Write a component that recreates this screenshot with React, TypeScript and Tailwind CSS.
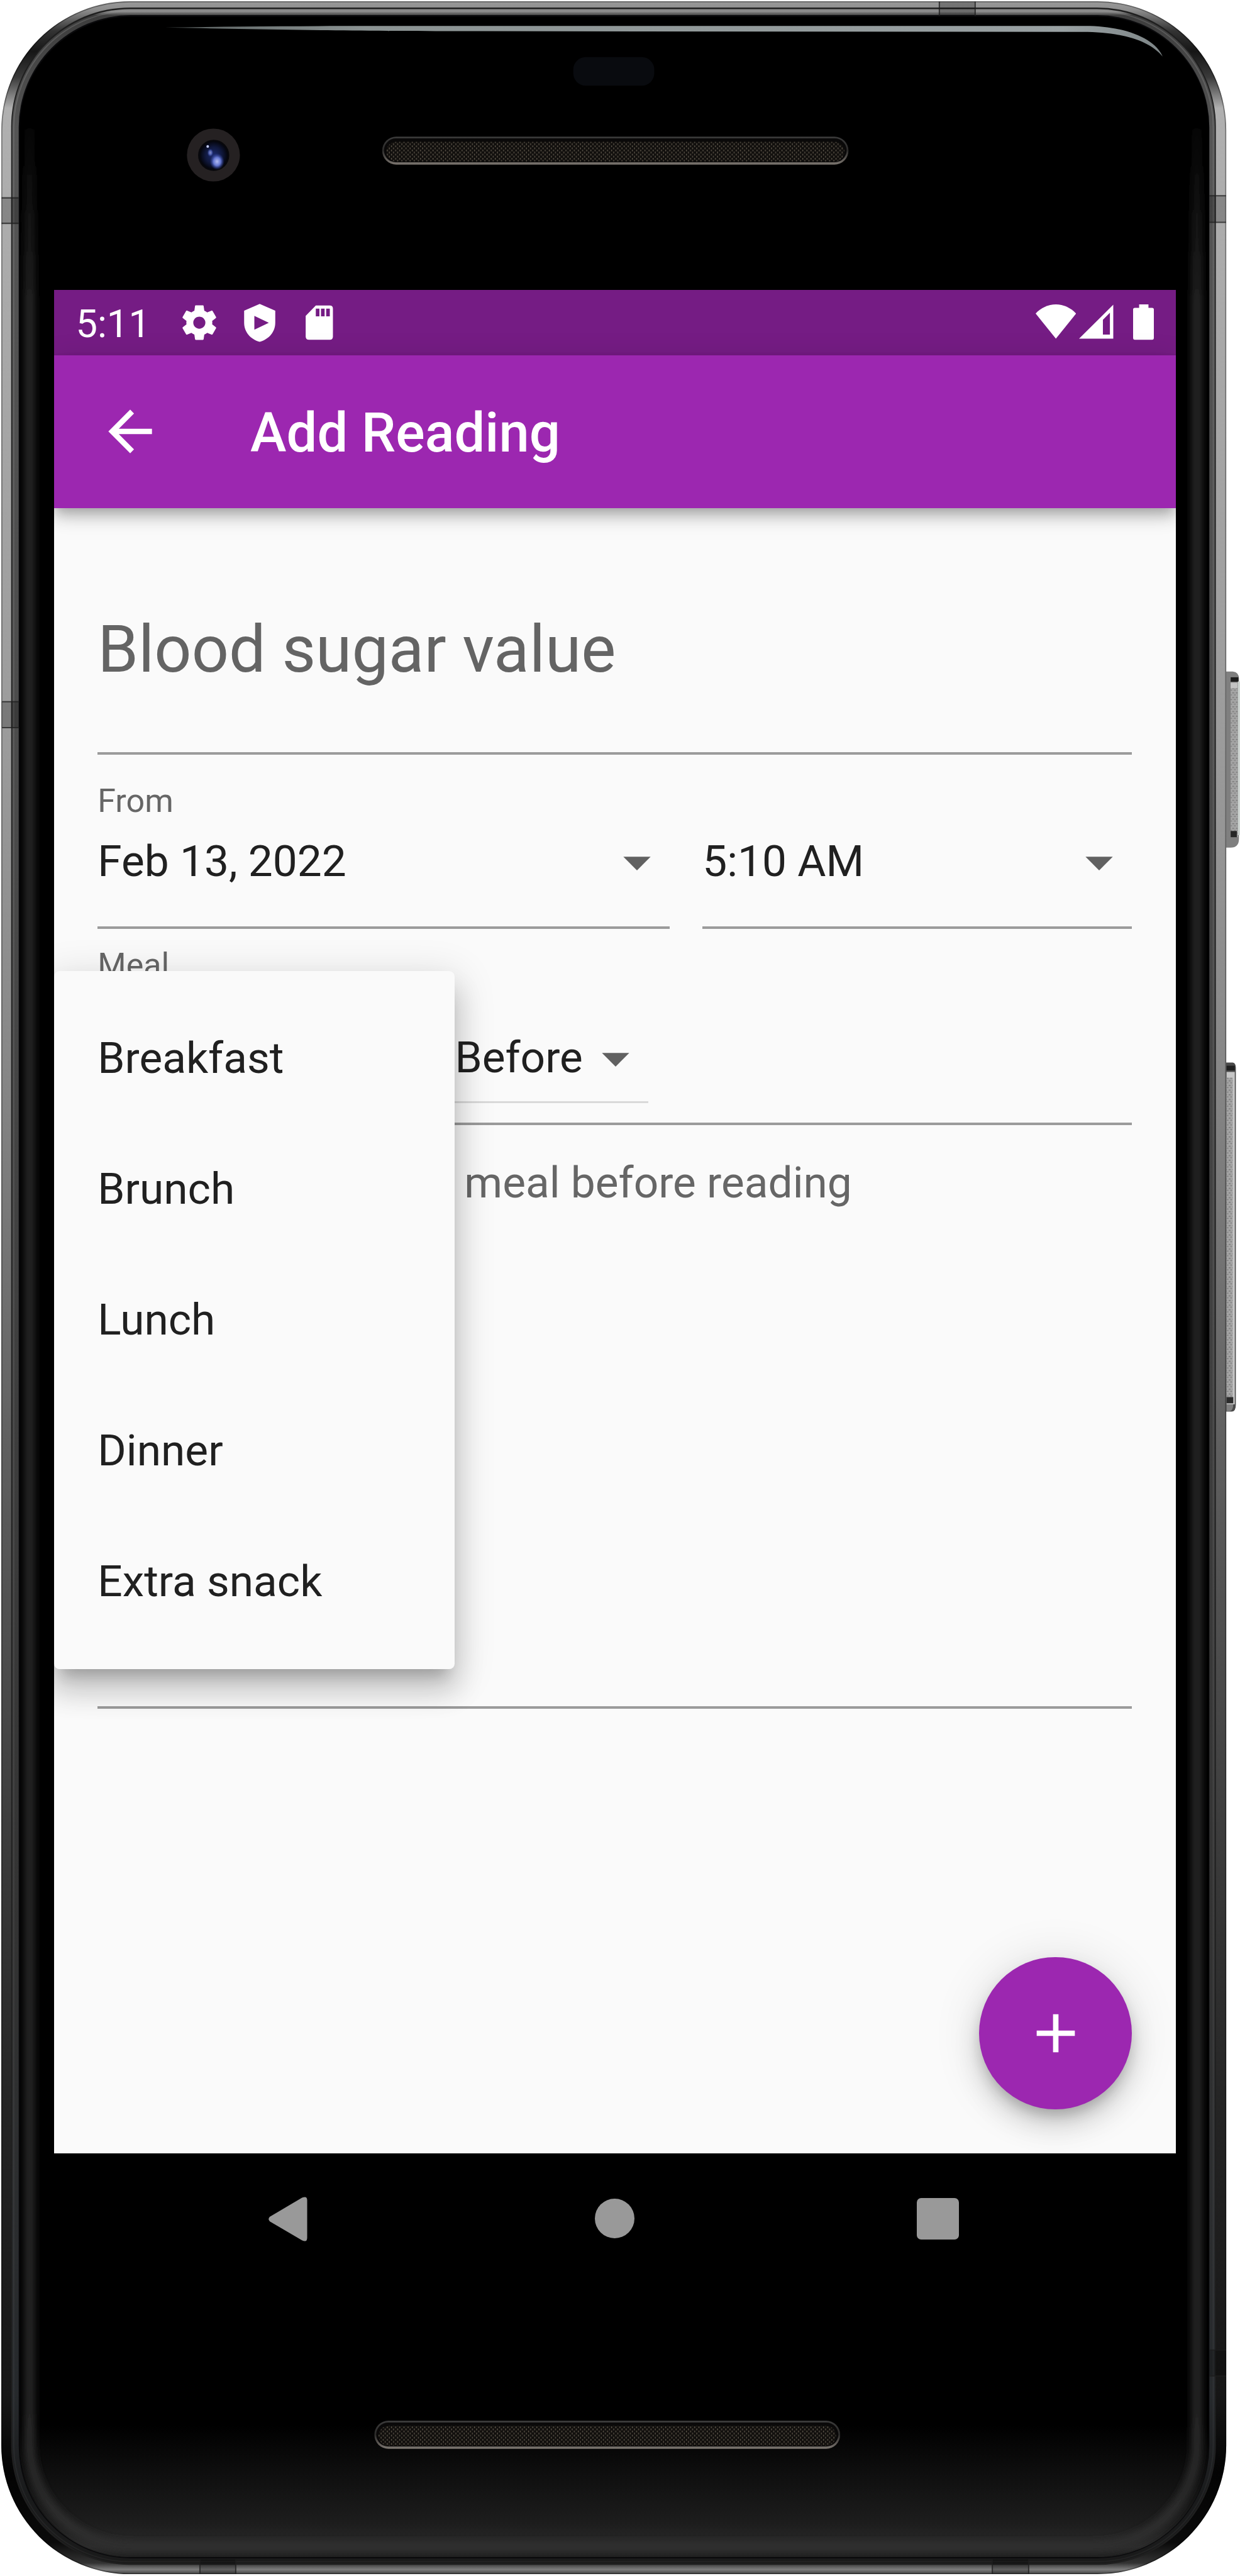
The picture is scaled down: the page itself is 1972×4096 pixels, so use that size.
import React from "react";

const meals = ["Breakfast", "Brunch", "Lunch", "Dinner", "Extra snack"];

function Grille({ x, y, w, h }: { x: number; y: number; w: number; h: number }) {
  return (
    <g>
      <rect x={x} y={y} width={w} height={h} rx={h / 2} fill="url(#grilleRim)" />
      <rect x={x + 3.5} y={y + 3.5} width={w - 7} height={h - 8} rx={(h - 8) / 2} fill="#0a0909" />
      <rect x={x + 8} y={y + 10} width={w - 16} height={h - 16} rx={(h - 16) / 2} fill="#110f0d" />
      <rect x={x + 8} y={y + 10} width={w - 16} height={h - 16} rx={(h - 16) / 2} fill="url(#mesh)" />
    </g>
  );
}

function PhoneFrame() {
  return (
    <svg className="absolute inset-0 h-full w-full" viewBox="0 0 2388 4960" preserveAspectRatio="none" aria-hidden="true">
      <defs>
        <linearGradient id="rim" gradientUnits="userSpaceOnUse" x1="0" y1="0" x2="0" y2="4960">
          <stop offset="0" stopColor="#9c9c9c" />
          <stop offset="0.004" stopColor="#8c8c8c" />
          <stop offset="0.012" stopColor="#333333" />
          <stop offset="0.02" stopColor="#161616" />
          <stop offset="0.03" stopColor="#3a3a3a" />
          <stop offset="0.042" stopColor="#b0b0b0" />
          <stop offset="0.29" stopColor="#9b9b9b" />
          <stop offset="0.42" stopColor="#868686" />
          <stop offset="0.56" stopColor="#606060" />
          <stop offset="0.73" stopColor="#383838" />
          <stop offset="0.82" stopColor="#242424" />
          <stop offset="0.93" stopColor="#161616" />
          <stop offset="0.96" stopColor="#030303" />
          <stop offset="0.987" stopColor="#0a0a0a" />
          <stop offset="0.995" stopColor="#333333" />
          <stop offset="0.9975" stopColor="#7d7d7d" />
          <stop offset="1" stopColor="#2a2a2a" />
        </linearGradient>
        <linearGradient id="lip" gradientUnits="userSpaceOnUse" x1="0" y1="0" x2="0" y2="4960">
          <stop offset="0" stopColor="#8a8a8a" />
          <stop offset="0.0045" stopColor="#8a8a8a" />
          <stop offset="0.006" stopColor="#3d3d3d" />
          <stop offset="0.05" stopColor="#555555" />
          <stop offset="0.3" stopColor="#4b4b4b" />
          <stop offset="0.75" stopColor="#333333" />
          <stop offset="0.93" stopColor="#26292c" />
          <stop offset="0.97" stopColor="#191a1b" />
          <stop offset="1" stopColor="#1a1a1a" />
        </linearGradient>
        <linearGradient id="lipEdge" gradientUnits="userSpaceOnUse" x1="0" y1="0" x2="0" y2="4960">
          <stop offset="0" stopColor="#999" stopOpacity="0.3" />
          <stop offset="0.6" stopColor="#999" stopOpacity="0.2" />
          <stop offset="1" stopColor="#777" stopOpacity="0.1" />
        </linearGradient>
        <linearGradient id="sheen" gradientUnits="userSpaceOnUse" x1="0" y1="0" x2="0" y2="4960">
          <stop offset="0.04" stopColor="#242424" stopOpacity="0" />
          <stop offset="0.12" stopColor="#262626" stopOpacity="1" />
          <stop offset="0.92" stopColor="#262626" />
          <stop offset="1" stopColor="#303030" />
        </linearGradient>
        <linearGradient id="floor" x1="0" y1="0" x2="0" y2="1">
          <stop offset="0" stopColor="#000" />
          <stop offset="0.35" stopColor="#0e0e0e" />
          <stop offset="0.75" stopColor="#1d1d1d" />
          <stop offset="0.92" stopColor="#2b2b2b" />
          <stop offset="1" stopColor="#1e1e1e" />
        </linearGradient>
        <linearGradient id="grilleRim" x1="0" y1="0" x2="0" y2="1">
          <stop offset="0" stopColor="#3a3a3a" />
          <stop offset="0.5" stopColor="#2c2b2a" />
          <stop offset="1" stopColor="#7b756f" />
        </linearGradient>
        <linearGradient id="glint" gradientUnits="userSpaceOnUse" x1="318" y1="0" x2="2240" y2="0">
          <stop offset="0" stopColor="#596060" />
          <stop offset="0.2" stopColor="#8b9393" />
          <stop offset="0.9" stopColor="#99a1a3" />
          <stop offset="1" stopColor="#7d8587" />
        </linearGradient>
        <radialGradient id="lens" cx="0.5" cy="0.5" r="0.5">
          <stop offset="0" stopColor="#1b2a6e" />
          <stop offset="0.6" stopColor="#10183c" />
          <stop offset="1" stopColor="#04050c" />
        </radialGradient>
        <radialGradient id="spot" cx="0.5" cy="0.5" r="0.5">
          <stop offset="0" stopColor="#b4bdf2" />
          <stop offset="0.5" stopColor="#6476d0" />
          <stop offset="1" stopColor="#2a3c98" stopOpacity="0" />
        </radialGradient>
        <pattern id="mesh" width="8" height="8" patternUnits="userSpaceOnUse">
          <rect x="1" y="0" width="1.8" height="3.4" fill="#5a5348" />
          <rect x="5" y="4" width="1.8" height="3.4" fill="#5a5348" />
        </pattern>
        <pattern id="knurl" width="7" height="9" patternUnits="userSpaceOnUse">
          <rect width="7" height="9" fill="#a6a6a6" />
          <rect x="0" y="1" width="4" height="2" fill="#7c7c7c" />
          <rect x="3" y="5" width="4" height="2" fill="#838383" />
        </pattern>
        <filter id="soft" filterUnits="userSpaceOnUse" x="0" y="0" width="2388" height="4960">
          <feGaussianBlur stdDeviation="7" />
        </filter>
        <clipPath id="glass">
          <rect x="38" y="32" width="2290" height="4892" rx="214" />
        </clipPath>
      </defs>

      {/* power key */}
      <path d="M2360 1293h14q12 1 12 14v308q0 17-16 17h-10z" fill="#7f7f7f" />
      <rect x="2370" y="1304" width="14" height="308" fill="url(#knurl)" />
      <rect x="2370" y="1304" width="15" height="9" fill="#1c1c1c" />
      <rect x="2370" y="1315" width="13" height="10" fill="#c4c4c4" />
      <rect x="2370" y="1600" width="12" height="12" fill="#262626" />
      <rect x="2384" y="1312" width="4" height="296" fill="#cfd5d2" />

      {/* volume rocker */}
      <path d="M2360 2046h14q6 1 6 10v648q0 14-8 14h-12z" fill="#4a4a4a" />
      <rect x="2362" y="2064" width="16" height="640" fill="#c6c6c6" />
      <rect x="2362" y="2075" width="12" height="615" fill="url(#knurl)" />
      <rect x="2362" y="2052" width="16" height="9" fill="#202020" />
      <rect x="2362" y="2690" width="13" height="12" fill="#2b2b2b" />
      <path d="M2362 2704h13q0 12-7 13h-6z" fill="#808080" />

      <rect x="2.5" y="2.5" width="2359" height="4954" rx="248" fill="url(#rim)" />
      <rect x="3.5" y="3.5" width="2357" height="4952" rx="247" fill="none" stroke="#000" strokeOpacity="0.35" strokeWidth="2" />
      <rect x="21.5" y="14.5" width="2320" height="4924" rx="229" fill="#1f1f1f" />
      <rect x="23.5" y="17.5" width="2316" height="4918" rx="227" fill="url(#lip)" />
      <rect x="26.5" y="21.5" width="2310" height="4911" rx="224" fill="none" stroke="url(#lipEdge)" strokeWidth="2" />
      <rect x="36" y="29" width="2293" height="4897" rx="216" fill="#0a0a0c" />
      <rect x="38" y="32" width="2290" height="4892" rx="214" fill="#000" />

      <g clipPath="url(#glass)">
        <rect x="30" y="4670" width="2310" height="254" fill="url(#floor)" />
        <path d="M57 230V4705A198 198 0 0 0 255 4903H2107A198 198 0 0 0 2305 4705V230" fill="none" stroke="url(#sheen)" strokeWidth="20" filter="url(#soft)" />
      </g>

      {/* antenna breaks */}
      <g fill="#000" fillOpacity="0.22">
        <rect x="3" y="381" width="33" height="49" />
        <rect x="3" y="1351" width="34" height="50" />
        <rect x="2329" y="377" width="32" height="51" />
        <rect x="2329" y="4525" width="32" height="50" />
        <rect x="1809" y="3" width="69" height="28" />
        <rect x="385" y="4928" width="69" height="28" />
        <rect x="1911" y="4928" width="70" height="28" />
      </g>
      <g stroke="#1d1d1d" strokeOpacity="0.75" strokeWidth="2.5">
        <path d="M3 381h33M3 430h33M4 1351h33M4 1401h33M2329 377h32M2329 428h32M2329 4525h32M2329 4575h32M1809 3v28M1878 3v28M385 4928v28M454 4928v28M1911 4928v28M1981 4928v28" />
      </g>

      <path d="M318 53C450 51 560 50 700 50H2090C2170 50 2226 76 2239 109C2214 78 2160 61.5 2085 61.5L900 60C640 60 480 56 318 53z" fill="url(#glint)" />

      <rect x="1104" y="110" width="156" height="55" rx="24" fill="#090b0f" />

      <circle cx="411" cy="298.500" r="51" fill="#252122" />
      <circle cx="411.500" cy="299" r="30" fill="#08080c" />
      <circle cx="411.500" cy="299" r="27" fill="url(#lens)" />
      <ellipse cx="418" cy="311" rx="14" ry="16" fill="url(#spot)" />
      <ellipse cx="405" cy="294" rx="6" ry="8" fill="url(#spot)" opacity="0.7" />
      <circle cx="400" cy="282" r="2.500" fill="#c3ccf5" />

      <Grille x={736} y={263} w={898} h={54} />
      <Grille x={721} y={4661} w={897} h={54} />
    </svg>
  );
}

function StatusBar() {
  return (
    <div className="flex h-[104px] items-center bg-[#751c84] pr-[34.500px] pl-[34.500px]">
      <span className="w-[163.500px] pt-[6px] text-[61.500px] leading-none text-white">5:11</span>
      <div className="flex flex-1 gap-[29.700px]">
        <svg className="size-[66px]" viewBox="0 0 24 24" fill="#fff">
          <path d="M19.430 12.980c.04-.32.07-.64.07-.98s-.03-.66-.07-.98l2.110-1.650c.19-.15.24-.42.12-.64l-2-3.460c-.12-.22-.39-.3-.61-.22l-2.490 1c-.52-.4-1.080-.73-1.690-.98l-.38-2.650C14.460 2.180 14.250 2 14 2h-4c-.25 0-.46.18-.49.42l-.38 2.650c-.61.25-1.170.59-1.690.98l-2.490-1c-.23-.09-.49 0-.61.22l-2 3.460c-.13.22-.07.49.12.64l2.110 1.650c-.04.32-.07.65-.07.98s.03.66.07.98l-2.110 1.650c-.19.15-.24.42-.12.64l2 3.460c.12.22.39.3.61.22l2.490-1c.52.4 1.080.73 1.690.98l.38 2.650c.03.24.24.42.49.42h4c.25 0 .46-.18.49-.42l.38-2.650c.61-.25 1.170-.59 1.690-.98l2.490 1c.23.09.49 0 .61-.22l2-3.460c.12-.22.07-.49-.12-.64l-2.110-1.650zM12 15.500c-1.930 0-3.500-1.570-3.500-3.500s1.570-3.500 3.500-3.500 3.500 1.570 3.500 3.500-1.570 3.500-3.500 3.500z" />
        </svg>
        <svg className="size-[66px]" viewBox="460 581 80 80" fill="#fff" fillRule="evenodd">
          <path d="M500 585l30 13v23c0 18-12 32-30 37c-18-5-30-19-30-37v-23zM489.700 608v26.600L517.600 621.300z" />
        </svg>
        <svg className="size-[66px]" viewBox="576 581 80 80" fill="#fff" fillRule="evenodd">
          <path d="M609 588h27q6 0 6 6v54q0 6-6 6h-40q-6.500 0-6.500-6V608zM609 594v15h7v-15zM619 594v15h7v-15zM629 594v15h7v-15z" />
        </svg>
      </div>
      <svg className="h-[66px] w-[64.400px]" viewBox="1994 581 78 80" fill="#fff">
        <path d="M2033 652L1994 603.500C2004 593 2018 586 2033 586C2048 586 2062 593 2072 603.500z" />
      </svg>
      <svg className="ml-[5px] h-[66px] w-[54.500px]" viewBox="2078 581 66 80" fill="#fff" fillRule="evenodd">
        <path d="M2144 586.500V652H2078zM2124 615.500V644H2137.500V602z" />
      </svg>
      <svg className="ml-[31.400px] h-[66px] w-[33px]" viewBox="2182 581 40 80" fill="#fff">
        <path d="M2193.600 586h18v6.600h7q3.400 0 3.400 3.400v54.500q0 3.500-3.400 3.500h-33.200q-3.400 0-3.400-3.500V596q0-3.400 3.400-3.400h8.200z" />
      </svg>
    </div>
  );
}

function AppBar() {
  return (
    <div className="relative z-10 flex h-[242.800px] items-center bg-[#9c27b0] pl-[69.400px] shadow-[0_8.700px_17.300px_-4.300px_rgba(0,0,0,0.2),0_17.300px_21.700px_0_rgba(0,0,0,0.14),0_4.300px_43px_0_rgba(0,0,0,0.12)]">
      <svg className="size-[104px]" viewBox="0 0 24 24" fill="#fff">
        <path d="M20 11H7.830l5.590-5.590L12 4l-8 8 8 8 1.410-1.410L7.830 13H20v-2z" />
      </svg>
      <h1 className="ml-[138.800px] pt-[6px] text-[86.700px] leading-none font-medium text-white">Add Reading</h1>
    </div>
  );
}

function DropArrow() {
  return (
    <svg className="size-[104px] shrink-0" viewBox="0 0 24 24" fill="#616161">
      <path d="M7 10l5 5 5-5z" />
    </svg>
  );
}

function Picker({ value }: { value: string }) {
  return (
    <div className="flex h-[104px] items-center justify-between text-[69.400px] leading-none text-[#202020]">
      <span className="-mt-[2px]">{value}</span>
      <DropArrow />
    </div>
  );
}

function Form() {
  return (
    <div className="px-[69.400px]">
      <div className="h-[392.500px] border-b-[4px] border-[#9b9b9b] pt-[173.400px]">
        <div className="text-[104px] leading-none text-[#646464]">Blood sugar value</div>
      </div>

      <div className="flex h-[276.900px] gap-[52px]">
        <div className="w-[910px] border-b-[4px] border-[#9b9b9b] pt-[48px]">
          <div className="mb-[19.100px] text-[52px] leading-none text-[#666]">From</div>
          <Picker value="Feb 13, 2022" />
        </div>
        <div className="flex-1 border-b-[4px] border-[#9b9b9b] pt-[119.100px]">
          <Picker value="5:10 AM" />
        </div>
      </div>

      <div className="h-[311.700px] border-b-[4px] border-[#9b9b9b] pt-[32.100px]">
        <div className="mb-[69.900px] text-[52px] leading-none text-[#666]">Meal</div>
        <div className="ml-[568.200px] h-[123px] w-[308px] border-b-[3px] border-[#d9d9d9]">
          <Picker value="Before" />
        </div>
      </div>

      <div className="h-[928.200px] border-b-[4px] border-[#9b9b9b] pt-[57px] pl-[583px]">
        <div className="text-[69.400px] leading-none text-[#666]">meal before reading</div>
      </div>
    </div>
  );
}

function MealMenu() {
  return (
    <ul className="absolute top-[736.600px] left-0 w-[637.500px] rounded-[8.700px] bg-[#fafafa] py-[34.700px] shadow-[0_21.700px_21.700px_-13px_rgba(0,0,0,0.2),0_34.700px_43.400px_4.300px_rgba(0,0,0,0.14),0_13px_60.700px_8.700px_rgba(0,0,0,0.12)]">
      {meals.map((meal) => (
        <li key={meal} className="flex h-[208.100px] items-center px-[69.400px] text-[69.400px] leading-none text-[#202020]">
          <span className="-mt-[1px]">{meal}</span>
        </li>
      ))}
    </ul>
  );
}

function NavBar() {
  return (
    <div className="flex h-[208px] items-center pl-[339.400px]">
      <svg className="h-[72px] w-[66px]" viewBox="515 4228 80 87" fill="#999">
        <path d="M520 4267.500L582 4231Q592 4226.500 592 4236V4308Q592 4318 582 4313L520 4276.500Q515.500 4272 520 4267.500z" />
      </svg>
      <div className="ml-[455px] size-[63px] rounded-full bg-[#999]" />
      <div className="ml-[449px] size-[66.300px] rounded-[7px] bg-[#999]" />
    </div>
  );
}

export default function App() {
  return (
    <div className="relative h-[4096px] w-[1972px] overflow-hidden bg-white pt-[460.800px] pl-[85.900px] font-[Roboto,sans-serif]">
      <PhoneFrame />
      <div className="relative w-[1783.700px]">
        <div className="relative overflow-hidden bg-[#fafafa]">
          <StatusBar />
          <AppBar />
          <div className="relative h-[2616.100px]">
            <Form />
            <MealMenu />
            <button
              aria-label="Add"
              className="absolute right-[69.400px] bottom-[69.400px] flex size-[242.800px] items-center justify-center rounded-full bg-[#9c27b0] shadow-[0_13px_21.700px_-4.300px_rgba(0,0,0,0.2),0_26px_43.400px_0_rgba(0,0,0,0.14),0_4.300px_78px_0_rgba(0,0,0,0.12)]"
            >
              <svg className="size-[104px]" viewBox="0 0 24 24" fill="#fff">
                <path d="M19 13h-6v6h-2v-6H5v-2h6V5h2v6h6v2z" />
              </svg>
            </button>
          </div>
        </div>
        <NavBar />
      </div>
    </div>
  );
}
